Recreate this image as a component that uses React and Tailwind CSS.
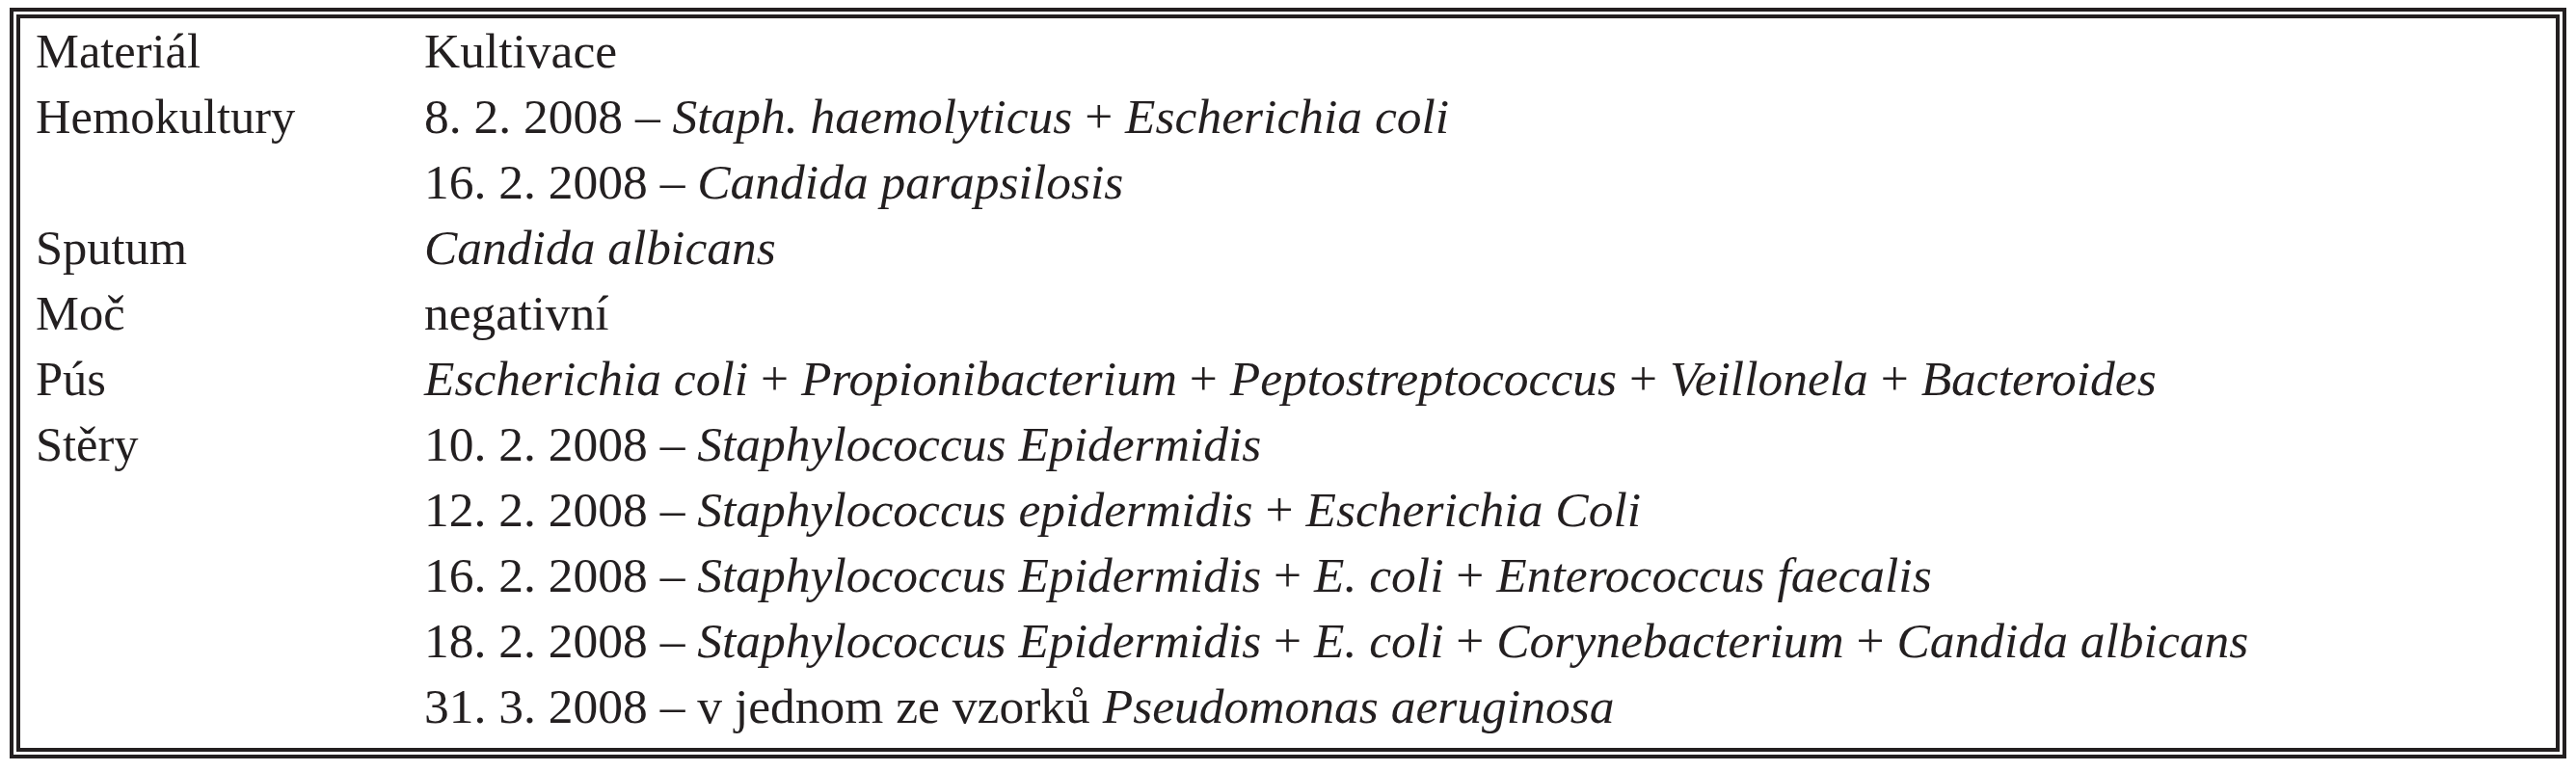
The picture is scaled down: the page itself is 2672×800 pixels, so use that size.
import React from 'react';

// radky tabulky: [material, [[text, kurziva], ...]]
const rows = [
  ['Materiál', [['Kultivace', false]]],
  ['Hemokultury', [['8. 2. 2008 – ', false], ['Staph. haemolyticus', true], [' + ', false], ['Escherichia coli', true]]],
  ['', [['16. 2. 2008 – ', false], ['Candida parapsilosis', true]]],
  ['Sputum', [['Candida albicans', true]]],
  ['Moč', [['negativní', false]]],
  ['Pús', [
    ['Escherichia coli', true], [' + ', false], ['Propionibacterium', true], [' + ', false],
    ['Peptostreptococcus', true], [' + ', false], ['Veillonela', true], [' + ', false], ['Bacteroides', true],
  ]],
  ['Stěry', [['10. 2. 2008 – ', false], ['Staphylococcus Epidermidis', true]]],
  ['', [['12. 2. 2008 – ', false], ['Staphylococcus epidermidis', true], [' + ', false], ['Escherichia Coli', true]]],
  ['', [
    ['16. 2. 2008 – ', false], ['Staphylococcus Epidermidis', true], [' + ', false],
    ['E. coli', true], [' + ', false], ['Enterococcus faecalis', true],
  ]],
  ['', [
    ['18. 2. 2008 – ', false], ['Staphylococcus Epidermidis', true], [' + ', false], ['E. coli', true],
    [' + ', false], ['Corynebacterium', true], [' + ', false], ['Candida albicans', true],
  ]],
  ['', [['31. 3. 2008 – v jednom ze vzorků ', false], ['Pseudomonas aeruginosa', true]]],
];

const App = () => {
  return (
    <div className="w-[2672px] h-[800px] bg-white pl-[10px] pt-[8px] text-[#231f20]" style={{ fontFamily: '"Liberation Serif", "Times New Roman", serif' }}>
      {/* dvojity ramecek */}
      <div className="w-[2652px] border-4 border-[#231f20] p-[3px]">
        <div className="border-4 border-[#231f20] pb-[9px]">
          {rows.map(([material, parts], i) => (
            <div key={i} className="flex items-baseline leading-[68px] whitespace-pre">
              <div className="w-[419px] pl-[16px] shrink-0 text-[50.5px]">{material}</div>
              <div className="text-[51.5px]">
                {parts.map(([text, italic], j) => (
                  <span key={j} className={italic ? 'italic' : ''}>{text}</span>
                ))}
              </div>
            </div>
          ))}
        </div>
      </div>
    </div>
  );
};

export default App;
